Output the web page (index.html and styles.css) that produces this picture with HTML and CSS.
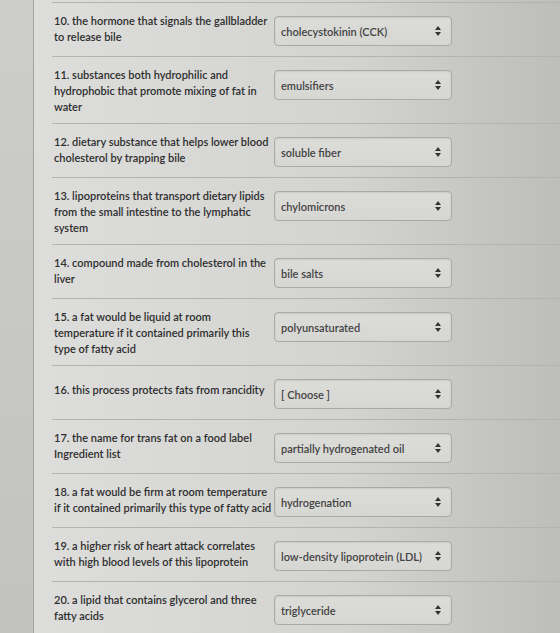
FILE: index.html
```html
<!DOCTYPE html>
<html>
<head>
    <title>Quiz - Lipids</title>
    <link rel="stylesheet" href="styles.css">
</head>
<body>
    <div class="page">
        <div class="gutter"></div>
        <div class="content">
            <div class="question">
                <div class="prompt">10. the hormone that signals the gallbladder to release bile</div>
                <div class="answer"><span>cholecystokinin (CCK)</span><svg class="arrows" width="6" height="10" viewBox="0 0 6 10"><path d="M3 0 L6 4 L0 4 Z M0 6 L6 6 L3 10 Z"/></svg></div>
            </div>
            <div class="question">
                <div class="prompt">11. substances both hydrophilic and hydrophobic that promote mixing of fat in water</div>
                <div class="answer"><span>emulsifiers</span><svg class="arrows" width="6" height="10" viewBox="0 0 6 10"><path d="M3 0 L6 4 L0 4 Z M0 6 L6 6 L3 10 Z"/></svg></div>
            </div>
            <div class="question">
                <div class="prompt">12. dietary substance that helps lower blood cholesterol by trapping bile</div>
                <div class="answer"><span>soluble fiber</span><svg class="arrows" width="6" height="10" viewBox="0 0 6 10"><path d="M3 0 L6 4 L0 4 Z M0 6 L6 6 L3 10 Z"/></svg></div>
            </div>
            <div class="question">
                <div class="prompt">13. lipoproteins that transport dietary lipids from the small intestine to the lymphatic system</div>
                <div class="answer"><span>chylomicrons</span><svg class="arrows" width="6" height="10" viewBox="0 0 6 10"><path d="M3 0 L6 4 L0 4 Z M0 6 L6 6 L3 10 Z"/></svg></div>
            </div>
            <div class="question">
                <div class="prompt">14. compound made from cholesterol in the liver</div>
                <div class="answer"><span>bile salts</span><svg class="arrows" width="6" height="10" viewBox="0 0 6 10"><path d="M3 0 L6 4 L0 4 Z M0 6 L6 6 L3 10 Z"/></svg></div>
            </div>
            <div class="question">
                <div class="prompt">15. a fat would be liquid at room temperature if it contained primarily this type of fatty acid</div>
                <div class="answer"><span>polyunsaturated</span><svg class="arrows" width="6" height="10" viewBox="0 0 6 10"><path d="M3 0 L6 4 L0 4 Z M0 6 L6 6 L3 10 Z"/></svg></div>
            </div>
            <div class="question">
                <div class="prompt single">16. this process protects fats from rancidity</div>
                <div class="answer"><span>[ Choose ]</span><svg class="arrows" width="6" height="10" viewBox="0 0 6 10"><path d="M3 0 L6 4 L0 4 Z M0 6 L6 6 L3 10 Z"/></svg></div>
            </div>
            <div class="question">
                <div class="prompt">17. the name for trans fat on a food label Ingredient list</div>
                <div class="answer"><span>partially hydrogenated oil</span><svg class="arrows" width="6" height="10" viewBox="0 0 6 10"><path d="M3 0 L6 4 L0 4 Z M0 6 L6 6 L3 10 Z"/></svg></div>
            </div>
            <div class="question">
                <div class="prompt">18. a fat would be firm at room temperature if it contained primarily this type of fatty acid</div>
                <div class="answer"><span>hydrogenation</span><svg class="arrows" width="6" height="10" viewBox="0 0 6 10"><path d="M3 0 L6 4 L0 4 Z M0 6 L6 6 L3 10 Z"/></svg></div>
            </div>
            <div class="question">
                <div class="prompt">19. a higher risk of heart attack correlates with high blood levels of this lipoprotein</div>
                <div class="answer"><span>low-density lipoprotein (LDL)</span><svg class="arrows" width="6" height="10" viewBox="0 0 6 10"><path d="M3 0 L6 4 L0 4 Z M0 6 L6 6 L3 10 Z"/></svg></div>
            </div>
            <div class="question">
                <div class="prompt">20. a lipid that contains glycerol and three fatty acids</div>
                <div class="answer"><span>triglyceride</span><svg class="arrows" width="6" height="10" viewBox="0 0 6 10"><path d="M3 0 L6 4 L0 4 Z M0 6 L6 6 L3 10 Z"/></svg></div>
            </div>
        </div>
    </div>
</body>
</html>
```

FILE: styles.css
```css
body {
    margin: 0;
    font-family: Lato, "Open Sans", sans-serif;
    color: #2e2e2e;
    background: #c9c9c6;
}
.page {
    display: flex;
    height: 633px;
    overflow: hidden;
}
.gutter {
    width: 33px;
    flex-shrink: 0;
    background: linear-gradient(to bottom, #cdcdca, #c2c2bf);
    border-right: 1px solid #a3a3a0;
}
.content {
    flex: 1;
    padding-left: 18px;
    background: linear-gradient(to right, #dddddb, #d3d3d0 60%, #bdbdb9);
}
.question {
    display: flex;
    align-items: flex-start;
    gap: 2px;
    border-top: 1px solid #b3b3af;
    padding: 10px 0 8px 2px;
}
.question:first-child {
    margin-top: 2px;
}
.prompt {
    width: 218px;
    flex-shrink: 0;
    font-size: 11px;
    font-weight: 600;
    line-height: 16px;
}
.prompt.single {
    padding-top: 6px;
}
.answer {
    display: flex;
    align-items: center;
    justify-content: space-between;
    box-sizing: border-box;
    width: 178px;
    height: 30px;
    margin: 3px 0 2px 0;
    padding: 0 10px 0 6px;
    font-size: 11px;
    font-weight: 600;
    color: #444;
    background: linear-gradient(to bottom, #dcdcd9, #d6d6d3);
    border: 1px solid #a9a9a6;
    border-radius: 4px;
    box-shadow: inset 0 1px 2px rgba(0, 0, 0, 0.08);
}
.arrows {
    fill: #333;
}
```
